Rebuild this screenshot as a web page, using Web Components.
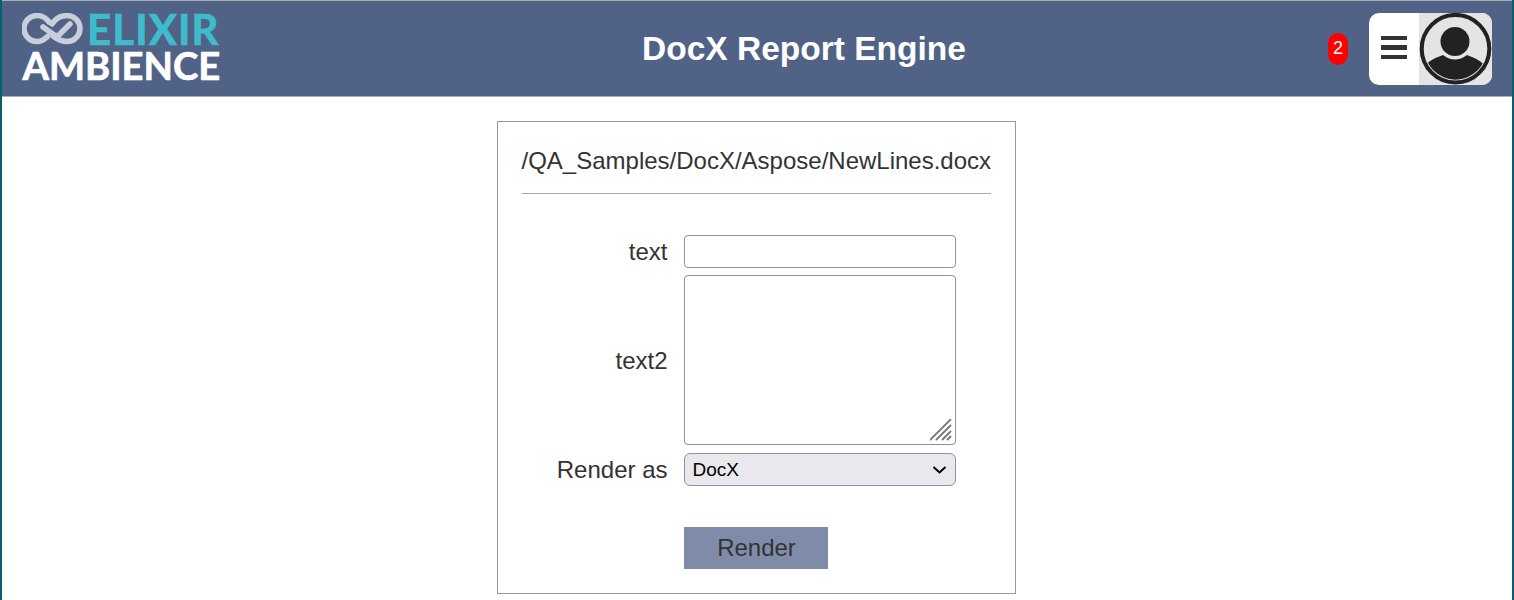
<!DOCTYPE html>
<html lang="en"><head><meta charset="utf-8"><title>DocX Report Engine</title>
<style>
html,body{margin:0;padding:0;height:600px;overflow:hidden;background:#04606f;font-family:"Liberation Sans",Arial,sans-serif}
</style></head><body>
<app-shell>
  <app-header title-text="DocX Report Engine" count="2"></app-header>
  <render-form path="/QA_Samples/DocX/Aspose/NewLines.docx"></render-form>
</app-shell>
<script>
function def(name, css, html){
  customElements.define(name, class extends HTMLElement{
    connectedCallback(){
      if(this.shadowRoot) return;
      const r=this.attachShadow({mode:'open'});
      r.innerHTML='<style>'+css+'</style>'+(typeof html==='function'?html(this):html);
    }
  });
}
def('app-shell',':host{display:block;margin:0 2px;height:600px;background:#fff;overflow:hidden}','<slot></slot>');
def('elixir-logo',`
:host{display:block;width:200px;height:72px;margin-left:20px;color:#fff;font-family:"Lato","Liberation Sans",sans-serif;font-weight:700}
.top{display:flex;align-items:center;height:36px}
svg{display:block;width:64px;height:36px;flex:none;filter:blur(.3px)}
.e{font-size:42px;line-height:36px;color:#3fbccb;letter-spacing:1.100px;margin:-4px 0 0 1px;font-weight:700;-webkit-text-stroke:.7px #3fbccb}
.a{font-size:38.200px;line-height:36px;letter-spacing:0;color:#fff;white-space:nowrap;font-weight:700;margin:-2px 0 0 .5px;-webkit-text-stroke:.7px #fff}
`,`<div class="top"><svg viewBox="22 13 64 36" fill="none" stroke="#c9cedc" stroke-width="5.500" stroke-linecap="round" stroke-linejoin="round">
<path d="M49 22C46 18 42 15.500 37 15.500A13 13 0 0 0 37 41.500C41 41.500 44.500 39.500 47.500 36.500"/>
<path d="M52 24C56 18 61 15.500 67 15.500A13 13 0 0 1 67 41.500C62 41.500 57.500 39.500 53 36"/>
<path d="M43 27L55 35.500L58.500 35.500L70 24"/>
</svg><span class="e">ELIXIR</span></div><div class="a">AMBIENCE</div>`);
def('app-header',`
:host{display:flex;align-items:center;height:95px;background:#506387;border-top:1px solid #a9aeb4;border-bottom:1px solid #a9aeb4;box-sizing:content-box}
.logo{flex:none;width:278px}
h1{flex:1;margin:0 0 1px;text-align:center;font-size:33.500px;line-height:37px;font-weight:700;color:#fff}
.right{flex:none;display:flex;align-items:center;gap:21px;margin-right:20px}
`,h=>`<div class="logo"><elixir-logo></elixir-logo></div><h1>${h.getAttribute('title-text')}</h1>
<div class="right"><count-badge>${h.getAttribute('count')}</count-badge><user-menu></user-menu></div>`);
def('count-badge',`:host{display:flex;align-items:center;justify-content:center;width:20px;height:32px;background:#f00;border-radius:10px;color:#fff;font-size:18px}`,'<slot></slot>');
def('user-menu',`
:host{display:flex;width:123px;height:72px;border-radius:10px;overflow:hidden;background:#fff}
.burger{width:50px;box-sizing:border-box;padding-bottom:2px;display:flex;flex-direction:column;justify-content:center;align-items:center;gap:5px}
.burger i{display:block;width:26px;height:4.500px;background:#333}
.av{flex:1;background:#e4e4e4;display:flex;align-items:center;justify-content:center}
svg{display:block;width:73px;height:72px;filter:blur(.4px)}
`,`<div class="burger"><i></i><i></i><i></i></div><div class="av"><svg viewBox="0 0 73 72">
<defs><clipPath id="c"><circle cx="36.500" cy="35.700" r="31"/></clipPath></defs>
<circle cx="36.500" cy="35.700" r="33.800" fill="none" stroke="#222" stroke-width="4"/>
<circle cx="36" cy="28.500" r="14.500" fill="#222"/>
<path clip-path="url(#c)" d="M4 72V58C6 50 12 46.500 24 42C28 45 32 46.500 36 46.500C40 46.500 44 45 48 42C60 46.500 66 50 68 58V72Z" fill="#222"/>
</svg></div>`);
def('render-form',`
:host{display:block;width:519px;height:473px;box-sizing:border-box;margin:24px auto 0;border:1px solid #999;padding:24px;color:#333;position:relative;left:-1px}
.path{font-size:24px;line-height:30px;padding-bottom:17px;border-bottom:1px solid #aaa;white-space:nowrap;margin-bottom:41px;box-sizing:content-box}
form{display:grid;grid-template-columns:146px 272px;column-gap:16px;row-gap:7px;margin:0}
label{font-size:24px;text-align:right;align-self:center}
.lo{padding-top:2px}
input,textarea,select{box-sizing:border-box;width:272px;margin:0;border:1px solid #8f8f9d;border-radius:4px;background:#fff;font-family:inherit;display:block}
input{height:33px;font-size:18px}
textarea{height:170px;font-size:18px;resize:none}
.wrap{position:relative;display:block;width:272px}
.grip{position:absolute;right:4px;bottom:4px;width:22px;height:22px;pointer-events:none}
.sel{margin-top:1px}
.chev{position:absolute;right:9px;top:13px;width:15px;height:8px;pointer-events:none}
select{appearance:none;-webkit-appearance:none;height:33px;font-size:19px;background:#e9e8ed;color:#000;border-radius:6px;padding:0 24px 0 8px}
button{grid-column:2;justify-self:start;margin-top:34px;width:144px;height:42px;border:0;background:#7f8ca9;color:#333;font:24px "Liberation Sans",Arial,sans-serif;padding:0 0 0 2px}
`,h=>`<div class="path">${h.getAttribute('path')}</div>
<form onsubmit="return false">
<label for="a">text</label><input id="a" type="text">
<label class="lo" for="b">text2</label><div class="wrap"><textarea id="b"></textarea><svg class="grip" viewBox="0 0 22 22" fill="none" stroke="#777" stroke-width="1.800"><path d="M0 21L21 0M6 21L21 6M12 21L21 12M17 21L21 17"/></svg></div>
<label class="lo" for="c">Render as</label><div class="wrap sel"><select id="c"><option>DocX</option></select><svg class="chev" viewBox="0 0 15 8" fill="none" stroke="#000" stroke-width="2"><path d="M1.500 1L7.500 6.500L13.500 1"/></svg></div>
<button type="button">Render</button>
</form>`);
</script>
</body></html>
